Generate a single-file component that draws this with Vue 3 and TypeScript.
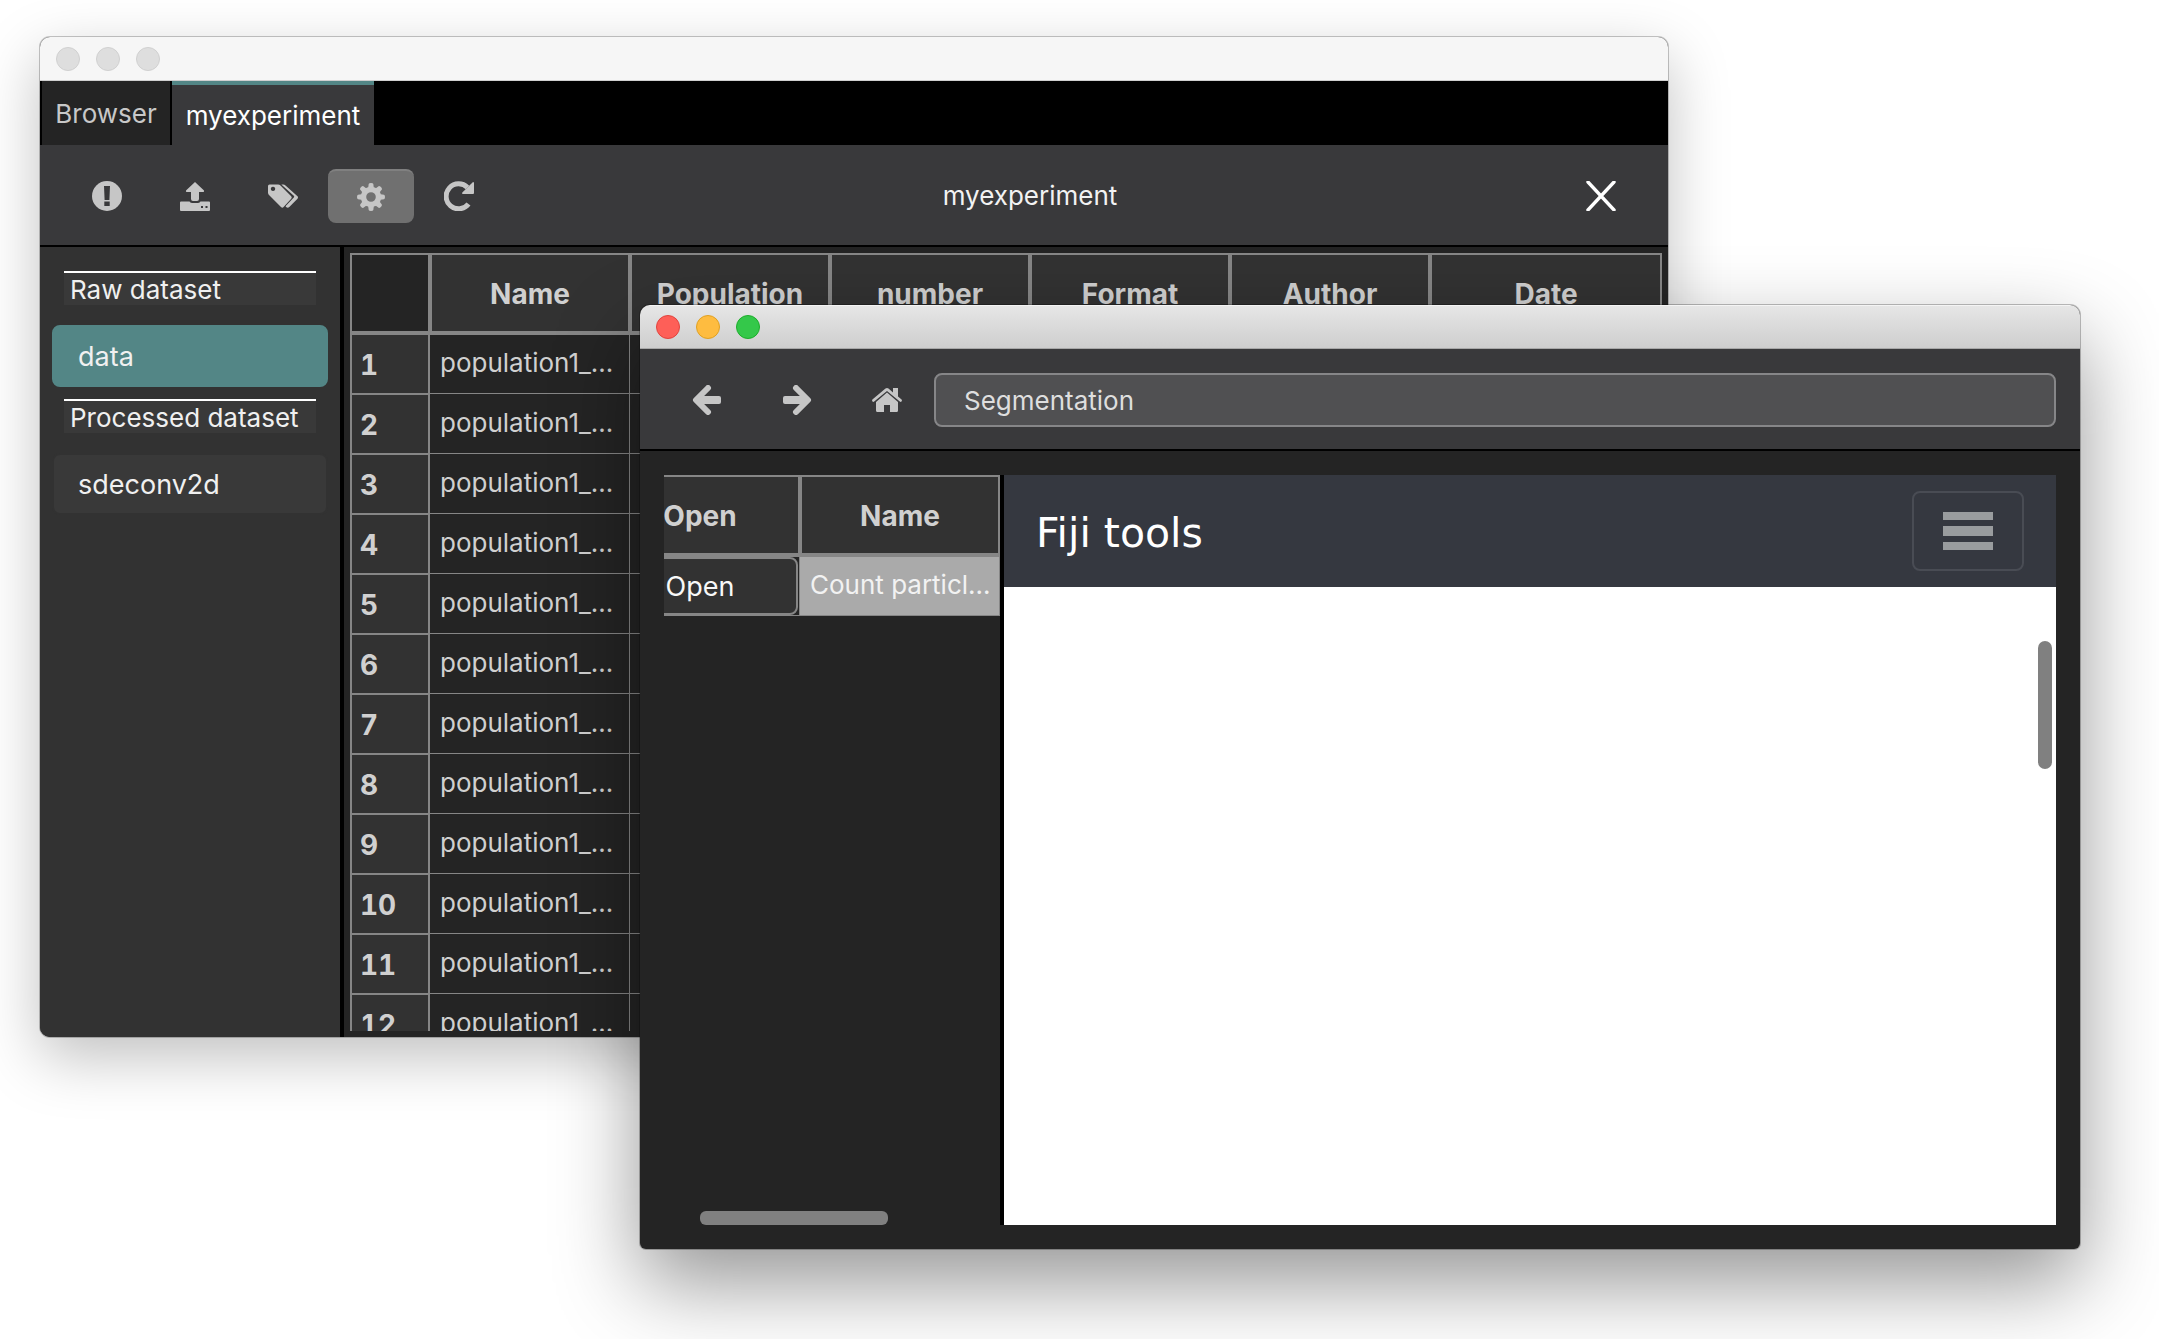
<script setup lang="ts">
import { ref } from 'vue'

interface Column {
  label: string
  width?: string
}

const tabs = ['Browser', 'myexperiment']
const activeTab = ref('myexperiment')
const activeDataset = ref('data')
const location = ref('Segmentation')

const columns: Column[] = [
  { label: 'Name', width: '200px' },
  { label: 'Population', width: '200px' },
  { label: 'number', width: '200px' },
  { label: 'Format', width: '200px' },
  { label: 'Author', width: '200px' },
  { label: 'Date' },
]

const rows = Array.from({ length: 12 }, (_, i) => ({
  id: i + 1,
  name: 'population1_...',
}))

const sections = [
  { title: 'Raw dataset', items: ['data'] },
  { title: 'Processed dataset', items: ['sdeconv2d'] },
]

const teeth = [0, 45, 90, 135, 180, 225, 270, 315]
</script>

<template>
  <main class="desktop">
    <section class="window experiment" aria-label="Experiment">
      <header class="titlebar">
        <span class="light"></span>
        <span class="light"></span>
        <span class="light"></span>
      </header>

      <nav class="tabs">
        <button
          v-for="tab in tabs"
          :key="tab"
          type="button"
          class="tab"
          :class="{ active: tab === activeTab }"
          @click="activeTab = tab"
        >
          {{ tab }}
        </button>
      </nav>

      <div class="toolbar">
        <button type="button" class="tool" aria-label="Information">
          <svg viewBox="0 0 30 30">
            <circle cx="15" cy="15" r="15" fill="#c6c6c6" />
            <path d="M12 5h6l-.6 14h-4.800z M12.300 20.500h5.400v4.500h-5.400z" fill="#39393b" />
          </svg>
        </button>
        <button type="button" class="tool" aria-label="Import">
          <svg viewBox="0 0 30 30" fill="#c6c6c6">
            <path d="M15 1l9 8.500q.6 1.500-1 1.500h-4v7q0 2-2 2h-4q-2 0-2-2v-7H7q-1.600 0-1-1.500z" />
            <path
              fill-rule="evenodd"
              d="M1 20.500h8.500q1 1.500 3 1.500h5q2 0 3-1.500H29q1 0 1 1V29q0 1-1 1H1q-1 0-1-1v-7.500q0-1 1-1z M21 25v2h2v-2z M25.500 25v2h2v-2z"
            />
          </svg>
        </button>
        <button type="button" class="tool" aria-label="Tags">
          <svg viewBox="0 0 30 30" fill="#c6c6c6">
            <path
              fill-rule="evenodd"
              d="M1.500 3.500H10q1.500 0 2.500 1l10.700 10.700q1.200 1.300 0 2.600l-7.600 8.300q-1.300 1.200-2.600 0L1 14q-1-1-1-2.500V5q0-1.500 1.500-1.500z M5 5.700a2.200 2.200 0 1 0 .01 0z"
            />
            <path d="M13.300 3.500h1.900q1.300 0 2.300 1l12 10.800q1 1.200 0 2.400l-8.200 8.300q-1.500 1.200-2.900.2l-.9-1 8.300-8.600q.8-.9 0-1.800z" />
          </svg>
        </button>
        <button type="button" class="tool pressed" aria-label="Process data">
          <svg viewBox="0 0 30 30" fill="#c6c6c6">
            <path
              v-for="angle in teeth"
              :key="angle"
              d="M12 7l.7-5q.2-1 2.300-1t2.300 1l.7 5z"
              :transform="`rotate(${angle} 15 15)`"
            />
            <circle cx="15" cy="15" r="7.500" fill="none" stroke="#c6c6c6" stroke-width="5.400" />
          </svg>
        </button>
        <button type="button" class="tool" aria-label="Refresh">
          <svg viewBox="0 0 30 30">
            <path d="M23.500 6.500A12.500 12.500 0 1 0 24.500 23" fill="none" stroke="#c6c6c6" stroke-width="5" />
            <path d="M29 1q1 0 1 1v10q0 1-1 1H19q-1.800-.2-.7-1.500z" fill="#c6c6c6" />
          </svg>
        </button>
        <h1 class="heading">myexperiment</h1>
        <button type="button" class="tool" aria-label="Close">
          <svg viewBox="0 0 30 30">
            <path d="M2 1l26 28M28 1L2 29" stroke="#fff" stroke-width="3.400" stroke-linecap="round" />
          </svg>
        </button>
      </div>

      <div class="split">
        <aside class="sidebar">
          <template v-for="section in sections" :key="section.title">
            <h2 class="section-title">{{ section.title }}</h2>
            <button
              v-for="item in section.items"
              :key="item"
              type="button"
              class="dataset"
              :class="{ active: item === activeDataset }"
              @click="activeDataset = item"
            >
              {{ item }}
            </button>
          </template>
        </aside>
        <div class="table-area">
          <div class="clip">
            <table class="grid">
              <colgroup>
                <col style="width: 80px" />
                <col v-for="c in columns" :key="c.label" :style="{ width: c.width }" />
              </colgroup>
              <thead>
                <tr>
                  <td class="corner"></td>
                  <th v-for="c in columns" :key="c.label" scope="col">{{ c.label }}</th>
                </tr>
              </thead>
              <tbody>
                <tr v-for="row in rows" :key="row.id">
                  <th scope="row">{{ row.id }}</th>
                  <td class="name">{{ row.name }}</td>
                  <td v-for="n in 5" :key="n"></td>
                </tr>
              </tbody>
            </table>
          </div>
        </div>
      </div>
    </section>

    <section class="window finder" aria-label="Tools">
      <header class="titlebar">
        <span class="light red"></span>
        <span class="light amber"></span>
        <span class="light green"></span>
      </header>

      <div class="toolbar">
        <button type="button" class="tool" aria-label="Back">
          <svg viewBox="0 0 30 30">
            <path d="M16 3L4 15l12 12" fill="none" stroke="#c6c6c6" stroke-width="6" stroke-linecap="round" stroke-linejoin="round" />
            <path d="M6 11h21q2 0 2 2v4q0 2-2 2H6z" fill="#c6c6c6" />
          </svg>
        </button>
        <button type="button" class="tool" aria-label="Forward">
          <svg viewBox="0 0 30 30">
            <path d="M14 3l12 12-12 12" fill="none" stroke="#c6c6c6" stroke-width="6" stroke-linecap="round" stroke-linejoin="round" />
            <path d="M24 11H3q-2 0-2 2v4q0 2 2 2h21z" fill="#c6c6c6" />
          </svg>
        </button>
        <button type="button" class="tool" aria-label="Home">
          <svg viewBox="0 0 30 30" fill="#c6c6c6">
            <path d="M15 7.500l11 9.500v8.500q0 1.500-1.500 1.500H18v-7h-6v7H5.500Q4 27 4 25.500V17z" />
            <path d="M13.500 3.600q1.500-1.200 3 0L21 7.400V3h5v8.600l3.600 3q.7 1-.1 1.800-.8.900-1.700.1L15 5.900 2.200 16.500q-.9.800-1.700-.1-.8-.8-.1-1.800z" />
          </svg>
        </button>
        <input v-model="location" class="address" type="text" aria-label="Location" />
      </div>

      <div class="panes">
        <div class="tool-list">
          <table class="grid shifted">
            <thead>
              <tr>
                <th scope="col">Open</th>
                <th scope="col">Name</th>
              </tr>
            </thead>
            <tbody>
              <tr>
                <td class="action"><button type="button" class="open">Open</button></td>
                <td class="name selected">Count particl...</td>
              </tr>
            </tbody>
          </table>
          <div class="scroll-x"></div>
        </div>
        <article class="page">
          <header class="navbar">
            <a href="#" class="brand">Fiji tools</a>
            <button type="button" class="toggle" aria-label="Menu">
              <svg viewBox="0 0 50 38" fill="#999c9e">
                <path d="M0 0h50v8H0z M0 14h50v10H0z M0 30h50v8H0z" />
              </svg>
            </button>
          </header>
          <div class="page-body">
            <div class="scroll-y"></div>
          </div>
        </article>
      </div>
    </section>
  </main>
</template>

<style>
body {
  margin: 0;
  background: #fff;
}
</style>

<style scoped>
* {
  box-sizing: border-box;
}

.desktop {
  position: relative;
  height: 100vh;
  overflow: hidden;
  background: #fff;
  font-family: Inter, 'Liberation Sans', sans-serif;
  font-size: 26px;
  line-height: 32px;
  color: #d0d0d0;
}

button,
input {
  margin: 0;
  padding: 0;
  border: 0;
  background: none;
  color: inherit;
  font: inherit;
}

.window {
  position: absolute;
  display: flex;
  flex-direction: column;
  overflow: hidden;
  border-radius: 10px;
  background: #242424;
}

.experiment {
  inset: 37px 491px 302px 40px;
  box-shadow: 0 0 0 1px rgba(0, 0, 0, 0.22), 0 20px 60px rgba(0, 0, 0, 0.25);
}

.finder {
  inset: 305px 79px 90px 640px;
  border-radius: 10px 10px 6px 6px;
  box-shadow: 0 0 0 1px rgba(0, 0, 0, 0.25), 0 34px 84px rgba(0, 0, 0, 0.42);
}

.titlebar {
  display: flex;
  flex: none;
  align-items: center;
  gap: 16px;
  height: 44px;
  padding-left: 16px;
  border-bottom: 1px solid #d0d0d0;
  background: #f6f6f6;
}

.finder .titlebar {
  border-top: 1px solid #f4f4f4;
  border-bottom-color: #a8a8a8;
  background: linear-gradient(#e6e6e6, #cecece);
}

.light {
  width: 24px;
  height: 24px;
  border: 1px solid #d0d0d0;
  border-radius: 50%;
  background: #dedede;
}

.red {
  border-color: #e0443e;
  background: #fe5f58;
}

.amber {
  border-color: #dfa023;
  background: #febc40;
}

.green {
  border-color: #1dad2b;
  background: #34c84a;
}

.tabs {
  display: flex;
  flex: none;
  gap: 2px;
  height: 64px;
  padding-left: 2px;
  background: #000;
}

.tab {
  width: 128px;
  padding-top: 2px;
  background: #242424;
  color: #c8c8c8;
}

.tab.active {
  width: 202px;
  border-top: 4px solid #538686;
  background: #39393b;
  color: #fff;
}

.toolbar {
  display: flex;
  flex: none;
  align-items: center;
  gap: 2px;
  height: 102px;
  padding: 2px 24px 0;
  border-bottom: 2px solid #000;
  background: #39393b;
}

.finder .toolbar {
  gap: 4px;
}

.tool {
  display: flex;
  flex: none;
  align-items: center;
  justify-content: center;
  width: 86px;
  height: 54px;
  border-radius: 8px;
}

.tool svg {
  width: 30px;
  height: 30px;
}

.tool.pressed {
  border-top: 2px solid #808080;
  background: #707070;
}

.heading {
  flex: 1;
  margin: 0;
  text-align: center;
  font: inherit;
  color: #f2f2f2;
}

.address {
  flex: 1;
  min-width: 0;
  height: 54px;
  padding: 0 28px;
  border: 2px solid #868688;
  border-radius: 8px;
  background: #505052;
  color: #dedede;
}

.split {
  display: flex;
  flex: 1;
  min-height: 0;
}

.sidebar {
  display: flex;
  flex: none;
  flex-direction: column;
  width: 304px;
  padding: 12px 12px 0;
  border-right: 4px solid #000;
  background: #323232;
  color: #f0f0f0;
}

.section-title {
  margin: 12px 12px 20px;
  height: 34px;
  padding-left: 6px;
  border-top: 2px solid #fff;
  background: #393939;
  font: inherit;
  line-height: 34px;
}

.dataset {
  height: 62px;
  padding: 2px 0 0 24px;
  border: 2px solid #323232;
  border-radius: 8px;
  background: #393939;
  text-align: left;
  font-size: 27px;
}

.dataset.active {
  border-color: #538686;
  background: #538686;
}

.table-area {
  flex: 1;
  min-width: 0;
  padding: 6px;
}

.clip {
  height: 100%;
  overflow: hidden;
}

.grid {
  width: 100%;
  border-spacing: 0;
  table-layout: fixed;
}

.grid th,
.grid td {
  padding: 0;
}

.grid thead th,
.corner {
  height: 80px;
  border: 2px solid #868686;
}

.grid thead th {
  padding-top: 2px;
}

.grid th {
  background: #323232;
  font-size: 28px;
  font-weight: 700;
}

.grid tbody th {
  height: 60px;
  padding: 2px 0 0 8px;
  border: 2px solid #868686;
  border-bottom: 0;
  text-align: left;
  font-variant-numeric: tabular-nums;
}

.grid tbody td {
  height: 60px;
  border-top: 1px solid #868686;
  border-right: 1px solid #868686;
}

.grid tbody tr:first-child td {
  border-top-width: 2px;
}

.grid .name {
  padding: 0 0 2px 10px;
  white-space: nowrap;
}

.panes {
  display: flex;
  flex: 1;
  min-height: 0;
  padding: 24px;
}

.tool-list {
  position: relative;
  flex: none;
  width: 340px;
  overflow: hidden;
  border-right: 4px solid #000;
}

.grid.shifted {
  width: 400px;
  margin-left: -64px;
}

.grid.shifted tbody td {
  height: 61px;
  border-bottom: 1px solid #868686;
}

.grid .selected {
  background: #aaa;
  color: #f2f2f2;
}

.open {
  display: block;
  width: 198px;
  height: 58px;
  padding: 2px 0 0 2px;
  border: 2px solid #868686;
  border-radius: 8px;
  background: #323232;
  color: #f8f8f8;
  font-size: 27px;
}

.scroll-x {
  position: absolute;
  bottom: 0;
  left: 36px;
  width: 188px;
  height: 14px;
  border-radius: 6px;
  background: #808080;
}

.page {
  display: flex;
  flex: 1;
  flex-direction: column;
  min-width: 0;
  background: #fff;
}

.navbar {
  display: flex;
  flex: none;
  align-items: center;
  justify-content: space-between;
  height: 112px;
  padding: 0 32px;
  background: #353840;
}

.brand {
  padding-top: 4px;
  color: #fff;
  font: 41px/48px 'DejaVu Sans', sans-serif;
  text-decoration: none;
}

.toggle {
  display: flex;
  align-items: center;
  justify-content: center;
  width: 112px;
  height: 80px;
  border: 2px solid #494c54;
  border-radius: 8px;
}

.toggle svg {
  width: 50px;
  height: 38px;
}

.page-body {
  position: relative;
  flex: 1;
}

.scroll-y {
  position: absolute;
  top: 54px;
  right: 4px;
  width: 14px;
  height: 128px;
  border-radius: 7px;
  background: #808080;
}
</style>
